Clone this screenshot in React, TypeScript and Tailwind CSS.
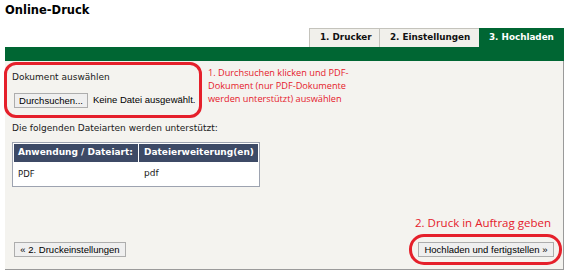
import React from 'react';

const verdana = { fontFamily: '"DejaVu Sans", Verdana, sans-serif' };
const arial = { fontFamily: '"Liberation Sans", Arial, sans-serif' };
const note = { fontFamily: '"Open Sans", "Noto Sans", sans-serif' };

const tabs = [
  { label: '1. Drucker', width: 'w-[70px]', active: false },
  { label: '2. Einstellungen', width: 'w-[100px]', active: false },
  { label: '3. Hochladen', width: 'w-[85px]', active: true },
];

const App = () => {
  return (
    <div className="w-[570px] h-[276px] bg-white overflow-hidden text-[#1a1a1a]" style={verdana}>
      {/* Title */}
      <h1 className="pl-[5px] pt-[3px] text-[11.5px] font-bold leading-[14px] text-black whitespace-nowrap">
        Online-Druck
      </h1>

      {/* Tabs */}
      <div className="ml-[5px] w-[559px] mt-[11px] flex justify-end">
        {tabs.map((tab) => (
          <div
            key={tab.label}
            className={`${tab.width} h-[19px] pl-[10px] flex items-center text-[8.8px] font-bold whitespace-nowrap ${
              tab.active
                ? 'bg-[#006633] text-white'
                : 'bg-[#f1f0eb] border-t border-l border-[#c4c3bc] text-[#111]'
            }`}
          >
            {tab.label}
          </div>
        ))}
      </div>
      <div className="ml-[5px] h-[14px] bg-[#006633] w-[559px]" />

      {/* Panel */}
      <div className="ml-[5px] w-[559px] h-[209px] bg-[#f4f3ef] border-r border-b border-[#9a9a9a] flex flex-col">
        <div className="flex">
          <div className="ml-[-1px] mt-[1px] w-[198px] h-[56px] shrink-0 border-[3px] border-[#e5202b] rounded-[12px] pl-[5px] pt-[6px]">
            <div className="text-[9px] leading-[12px] whitespace-nowrap">Dokument auswählen</div>
            <div className="mt-[10px] flex items-center gap-[5px] whitespace-nowrap" style={arial}>
              <button className="h-[15px] w-[74px] ml-[2px] border border-[#adadad] bg-[#efefef] text-[9.5px] leading-[13px] text-black">
                Durchsuchen...
              </button>
              <span className="text-[9.5px] text-black">Keine Datei ausgewählt.</span>
            </div>
          </div>
          <div className="ml-[6px] mt-[5px] text-[9.2px] leading-[13px] text-[#e5202b] whitespace-nowrap" style={note}>
            1. Durchsuchen klicken und PDF-
            <br />
            Dokument (nur PDF-Dokumente
            <br />
            werden unterstützt) auswählen
          </div>
        </div>

        <div className="ml-[7px] mt-[4px] text-[9px] leading-[12px] whitespace-nowrap">
          Die folgenden Dateiarten werden unterstützt:
        </div>

        <table className="ml-[7px] mt-[8px] w-[248px] bg-white border border-[#9da3b0] border-separate border-spacing-[1px] whitespace-nowrap">
          <thead>
            <tr className="bg-[#3d4a66] text-white h-[18px]">
              <th className="text-left pl-[4px] font-bold text-[9px] w-[124px]">Anwendung / Dateiart:</th>
              <th className="text-left pl-[5px] font-bold text-[9px]">Dateierweiterung(en)</th>
            </tr>
          </thead>
          <tbody>
            <tr className="h-[22px]">
              <td className="pl-[4px] text-[8.5px]">PDF</td>
              <td className="pl-[5px] text-[9px]">pdf</td>
            </tr>
          </tbody>
        </table>

        <div className="mt-auto flex items-end justify-between pb-[4px] pl-[9px] pr-[1px]" style={arial}>
          <button className="mb-[8px] h-[15px] w-[112px] border border-[#adadad] bg-[#efefef] text-[9.5px] leading-[13px] text-black whitespace-nowrap">
            « 2. Druckeinstellungen
          </button>
          <div className="flex flex-col items-end">
            <div className="mr-[11px] mb-[4px] text-[11.5px] leading-[15px] text-[#e5202b] whitespace-nowrap" style={note}>
              2. Druck in Auftrag geben
            </div>
            <div className="w-[153px] h-[31px] border-[3px] border-[#e5202b] rounded-[15px] flex items-center pl-[6px]">
              <button className="h-[15px] w-[136px] border border-[#adadad] bg-[#efefef] text-[9.5px] leading-[13px] text-black whitespace-nowrap">
                Hochladen und fertigstellen »
              </button>
            </div>
          </div>
        </div>
      </div>
    </div>
  );
};

export default App;
